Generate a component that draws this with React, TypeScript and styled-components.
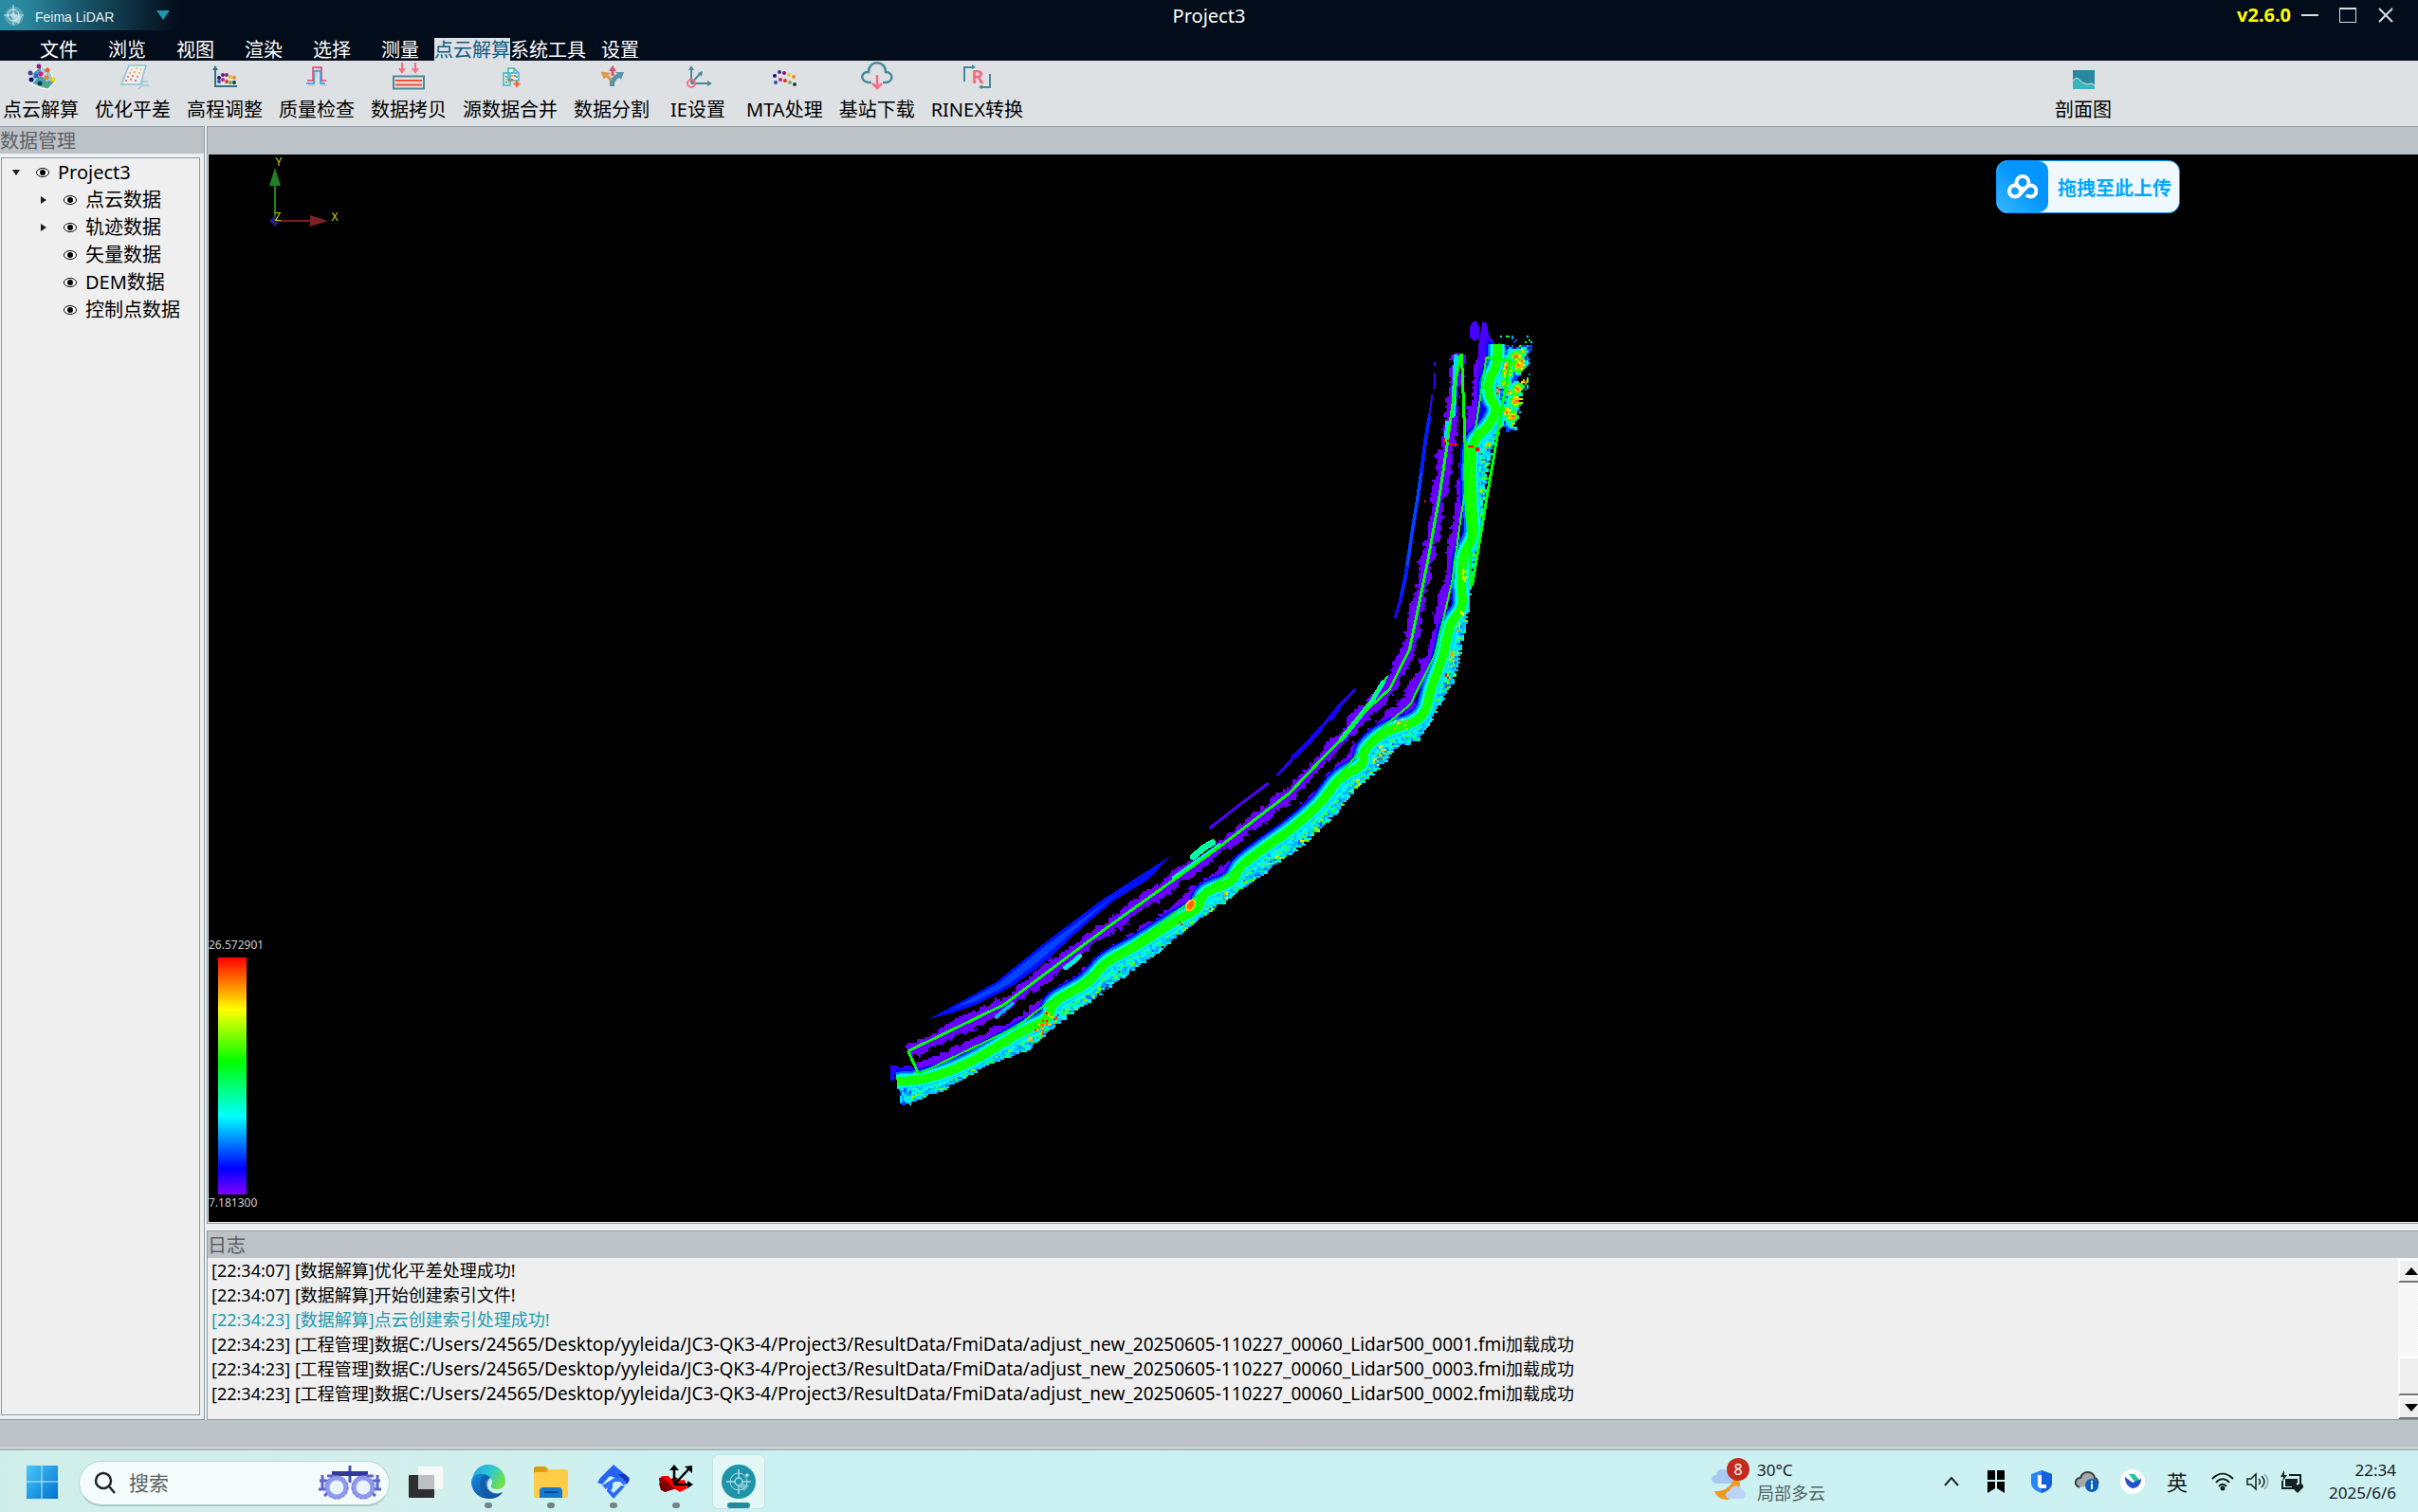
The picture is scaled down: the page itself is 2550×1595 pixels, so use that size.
import React from 'react';
import styled, { createGlobalStyle } from 'styled-components';

const fontUi = '"Noto Sans", "Noto Sans CJK SC", sans-serif';
const color = {
  ink: '#030c1a',
  ribbon: '#dee1e3',
  header: '#bdc2c6',
  face: '#efefef',
  edge: '#889dab',
  accent: '#2196aa',
};

const GlobalStyle = createGlobalStyle`
  * { box-sizing: border-box; }
  body { margin: 0; background: ${color.face}; font-family: ${fontUi}; font-size: 20px; color: #000; overflow: hidden; }
  button, input { font: inherit; color: inherit; border: 0; padding: 0; margin: 0; background: none; }
  ul { list-style: none; margin: 0; padding: 0; }
  svg { display: block; flex: none; }
`;

/* ---------- shell ---------- */

const Shell = styled.div`
  display: flex;
  flex-direction: column;
  height: 100vh;
`;

const TitleBar = styled.header`
  background: ${color.ink};
  color: #fff;
  height: 64px;
  flex: none;
`;

const TitleRow = styled.div`
  display: grid;
  grid-template-columns: 1fr auto 1fr;
  height: 40px;
`;

const Brand = styled.button`
  display: flex;
  align-items: center;
  width: 188px;
  height: 32px;
  padding-left: 4px;
  background: linear-gradient(90deg, #2a8ca3 0, #2a869d 28px, #1a5a70 80px, ${color.ink} 188px);
  font: 14px/32px "Liberation Sans", Arial, sans-serif;
  color: #e8f0f4;
`;

const BrandName = styled.span`
  margin: 4px 0 0 11px;
  width: 128px;
  text-align: left;
`;

const ProjectTitle = styled.h1`
  margin: 0;
  font-size: 20px;
  font-weight: 400;
  line-height: 34px;
`;

const WindowControls = styled.div`
  display: flex;
  justify-content: flex-end;
  align-items: center;
  height: 32px;
  padding-right: 14px;
`;

const Version = styled.span`
  color: #ff0;
  font-weight: 700;
  line-height: 34px;
`;

const WindowButton = styled.button`
  width: 40px;
  height: 32px;
  display: grid;
  place-items: center;
`;

const MenuBar = styled.nav`
  display: flex;
  height: 24px;
  padding-left: 26px;
`;

const MenuItem = styled.button<{ $active?: boolean }>`
  min-width: 72px;
  height: 24px;
  line-height: 26px;
  text-align: center;
  color: ${p => (p.$active ? '#0d5c82' : '#fff')};
  background: ${p => (p.$active ? color.ribbon : 'transparent')};
`;

const Ribbon = styled.div`
  display: flex;
  gap: 17px;
  flex: none;
  height: 69px;
  padding: 0 323px 0 3px;
  background: ${color.ribbon};
`;

const Tool = styled.button<{ $end?: boolean }>`
  display: flex;
  flex-direction: column;
  align-items: center;
  min-width: ${p => (p.$end ? 60 : 68)}px;
  margin-left: ${p => (p.$end ? 'auto' : 0)};
  line-height: 32px;
  white-space: nowrap;
`;

const Workspace = styled.main`
  display: grid;
  grid-template-columns: 216px minmax(0, 1fr);
  column-gap: 2px;
  flex: 1;
  min-height: 0;
  background: ${color.face};
`;

const Dock = styled.section<{ $grow?: boolean; $height?: number }>`
  display: flex;
  flex-direction: column;
  min-height: 0;
  flex: ${p => (p.$height ? `0 0 ${p.$height}px` : 1)};
  border: 1px solid ${color.edge};
  border-left-width: ${p => (p.$grow ? 1 : 0)}px;
  border-right-width: ${p => (p.$grow ? 0 : 1)}px;
`;

const DockColumn = styled.div`
  display: flex;
  flex-direction: column;
  gap: 7px;
  min-height: 0;
`;

const DockHeader = styled.h2`
  margin: 0;
  flex: none;
  height: 28px;
  background: ${color.header};
  color: #5d6166;
  font-size: 20px;
  font-weight: 400;
  line-height: 30px;
`;

const TreeBox = styled.div`
  flex: 1;
  margin: 4px 4px 4px 1px;
  border: 1px solid ${color.edge};
`;

const TreeRow = styled.li<{ $level: number }>`
  display: flex;
  align-items: center;
  height: 29px;
  padding-left: ${p => 8 + p.$level * 29}px;
  line-height: 28px;
  white-space: nowrap;
`;

const Twisty = styled.span`
  display: grid;
  place-items: center;
  width: 14px;
  margin-right: 13px;
`;

const TreeLabel = styled.span`
  margin-left: 8px;
`;

/* ---------- viewport ---------- */

const Viewport = styled.div`
  position: relative;
  flex: 1;
  min-height: 0;
  margin: 0 0 1px 1px;
  border-top: 1px solid ${color.header};
  background: #000;
  overflow: hidden;
`;

const CloudCanvas = styled.svg`
  width: 100%;
  height: 100%;
`;

const AxisOverlay = styled.svg`
  position: absolute;
  left: 55px;
  top: 0;
`;

const Legend = styled.div`
  position: absolute;
  left: 0;
  bottom: 11px;
  color: #ccc;
  font-size: 12px;
  line-height: 18px;
`;

const LegendBar = styled.div`
  width: 30px;
  height: 250px;
  margin: 4px 0 0 10px;
  background: linear-gradient(#f00, #ff0 22%, #0f0 44%, #0ff 67%, #00f 89%, #8000ff);
`;

const UploadPill = styled.button`
  position: absolute;
  top: 6px;
  right: 251px;
  display: flex;
  align-items: center;
  width: 194px;
  height: 56px;
  overflow: hidden;
  border: 1px solid #0a94ff;
  border-radius: 12px;
  background: #f0f8ff;
  color: #06a7ff;
  font-weight: 700;
  white-space: nowrap;
`;

const UploadMark = styled.span`
  display: grid;
  place-items: center;
  width: 54px;
  height: 54px;
  margin-right: 10px;
  border-radius: 10px;
  background: linear-gradient(45deg, #38b8ff, #0295ff 55%);
`;

/* ---------- log ---------- */

const LogBody = styled.div`
  display: flex;
  flex: 1;
  min-height: 0;
`;

const LogList = styled.ul`
  flex: 1;
  padding-left: 4px;
  font-size: 18px;
  line-height: 26px;
  white-space: nowrap;
  overflow: hidden;
`;

const LogLine = styled.li<{ $highlight?: boolean }>`
  height: 26px;
  color: ${p => (p.$highlight ? '#2499ad' : '#000')};
`;

const LogPath = styled.span`
  font-size: 19px;
`;

const ScrollBar = styled.div`
  display: flex;
  flex-direction: column;
  width: 21px;
  padding-top: 1px;
  background: repeating-conic-gradient(#fff 0 25%, ${color.face} 0 50%) 0 0 / 2px 2px;
`;

const ScrollButton = styled.button`
  display: grid;
  place-items: center;
  flex: none;
  height: 25px;
  padding-left: 4px;
  background: ${color.face};
  border-left: 2px solid #fff;
  border-top: 2px solid #fff;
  border-bottom: 2px solid #777;
`;

const ScrollThumb = styled.div`
  height: 41px;
  margin-top: auto;
  background: ${color.face};
  border-left: 2px solid #fff;
  border-top: 2px solid #fff;
  border-bottom: 2px solid #777;
`;

const StatusBar = styled.footer`
  flex: none;
  height: 32px;
  background: ${color.header};
  border-bottom: 2px solid #a5b7b7;
  box-shadow: inset 0 -1px #dfe4e4;
`;

/* ---------- taskbar ---------- */

const TaskBar = styled.footer`
  display: flex;
  align-items: center;
  flex: none;
  height: 65px;
  padding: 0 23px 0 27px;
  background: linear-gradient(90deg, #cfeeea, #d3efeb 14%, #caf1f2 30%, #cdf1f2);
  color: #14201f;
`;

const PlainButton = styled.button`
  display: grid;
  place-items: center;
`;

const SearchPill = styled.label`
  display: flex;
  align-items: center;
  width: 328px;
  height: 48px;
  margin: 4px 10px 0 22px;
  padding: 0 8px 0 15px;
  border: 1px solid #b9d9d8;
  border-bottom: 2px solid #a9c9c8;
  border-radius: 24px;
  background: #f3fbfb;
`;

const SearchInput = styled.input`
  flex: 1;
  min-width: 0;
  height: 32px;
  margin-left: 13px;
  font-size: 21px;
  outline: 0;
  &::placeholder { color: #586060; opacity: 1; }
`;

const Apps = styled.div`
  display: flex;
  gap: 10px;
`;

const AppButton = styled.button<{ $active?: boolean }>`
  display: flex;
  flex-direction: column;
  align-items: center;
  justify-content: space-between;
  width: 56px;
  height: 58px;
  padding-top: 10px;
  border-radius: 6px;
  border: 1px solid ${p => (p.$active ? '#c5e3e4' : 'transparent')};
  background: ${p => (p.$active ? '#e3f7f7' : 'transparent')};
`;

const RunMark = styled.span<{ $state: 'none' | 'open' | 'active' }>`
  width: ${p => (p.$state === 'active' ? 24 : 8)}px;
  height: 6px;
  border-radius: 3px;
  background: ${p => (p.$state === 'active' ? '#23899b' : p.$state === 'open' ? '#708685' : 'transparent')};
`;

const Weather = styled.button`
  display: flex;
  align-items: center;
  gap: 8px;
  margin-left: auto;
  margin-right: 110px;
  text-align: left;
  font-size: 17px;
  line-height: 24px;
`;

const Muted = styled.span`
  display: block;
  color: #536665;
  font-size: 18px;
`;

const Tray = styled.div`
  display: flex;
  align-items: center;
`;

const TrayButton = styled.button<{ $width: number }>`
  display: grid;
  place-items: center;
  width: ${p => p.$width}px;
  height: 40px;
  font-size: 22px;
  line-height: 40px;
`;

const Clock = styled.time`
  display: block;
  width: 86px;
  padding-top: 1px;
  text-align: right;
  font-size: 17px;
  line-height: 24px;
`;

/* ---------- point cloud ---------- */

type Pt = [number, number];

const band: Pt[] = [[1579,363],[1578,383],[1570,403],[1571,418],[1577,432],[1569,449],[1554,467],[1551,493],[1552,530],[1553,563],[1543,587],[1541,615],[1541,640],[1529,660],[1521,693],[1510,723],[1502,750],[1489,762],[1466,770],[1451,779],[1439,792],[1435,807],[1412,822],[1391,848],[1363,873],[1335,893],[1309,913],[1297,930],[1271,942],[1261,959],[1240,971],[1197,998],[1167,1015],[1145,1037],[1112,1057],[1103,1075],[1074,1090],[1023,1120],[979,1137],[945,1141]];
const outer: Pt[] = [[1588,367],[1588,395],[1583,420],[1585,440],[1578,456],[1572,470],[1567,490],[1564,520],[1560,548],[1554,580],[1550,610],[1548,630],[1540,677],[1531,717],[1512,750],[1494,780],[1473,787],[1451,811],[1430,828],[1400,864],[1371,890],[1315,931],[1260,970],[1213,1007],[1157,1048],[1114,1077],[1085,1104],[1070,1111],[1039,1122],[991,1149],[953,1163],[945,1143]];
const leftTrack: Pt[] = [[1540,373],[1535,400],[1526,467],[1517,527],[1505,593],[1494,647],[1486,685],[1465,727],[1434,755],[1414,780],[1396,798],[1359,837],[1286,893],[1256,915],[1232,932],[1165,980],[1118,1015],[1058,1060],[957,1109]];
const rightTrack: Pt[] = [[1567,377],[1554,463],[1546,510],[1540,547],[1531,613],[1513,690],[1487,743],[1457,768],[1434,793],[1414,815],[1383,853],[1363,872],[1308,913],[1264,944],[1213,982],[1167,1013],[1134,1040],[1106,1057],[1070,1084],[968,1133]];
const closingTracks: Pt[][] = [
  [[1541,373],[1545,477],[1545,520],[1549,567],[1551,618]],
  [[1552,618],[1592,380],[1567,377]],
  [[957,1109],[968,1133]],
];

const line = (pts: Pt[]) => 'M' + pts.map(p => p.join(' ')).join('L');

// Catmull-Rom subdivision, so the river channel bends softly.
function smooth(pts: Pt[]): Pt[] {
  const out: Pt[] = [];
  for (let i = 0; i < pts.length - 1; i++) {
    const p0 = pts[Math.max(0, i - 1)];
    const p1 = pts[i];
    const p2 = pts[i + 1];
    const p3 = pts[Math.min(pts.length - 1, i + 2)];
    for (let k = 0; k < 6; k++) {
      const t = k / 6;
      const f = (a: number, b: number, c: number, d: number) =>
        Math.round(5 * (2 * b + (c - a) * t + (2 * a - 5 * b + 4 * c - d) * t * t + (3 * b - a - 3 * c + d) * t * t * t)) / 10;
      out.push([f(p0[0], p1[0], p2[0], p3[0]), f(p0[1], p1[1], p2[1], p3[1])]);
    }
  }
  out.push(pts[pts.length - 1]);
  return out;
}

const channel = smooth(band);

function shift(pts: Pt[], amount: number): Pt[] {
  return pts.map((p, i) => {
    const a = pts[Math.max(0, i - 1)];
    const b = pts[Math.min(pts.length - 1, i + 1)];
    const len = Math.hypot(b[0] - a[0], b[1] - a[1]) || 1;
    return [p[0] + ((b[1] - a[1]) / len) * amount, p[1] - ((b[0] - a[0]) / len) * amount];
  });
}

function makeRandom(seed: number) {
  let s = seed;
  return () => {
    s = (s * 1664525 + 1013904223) >>> 0;
    return s / 4294967296;
  };
}

function resample(pts: Pt[], count: number): Pt[] {
  const dist = [0];
  for (let i = 1; i < pts.length; i++) {
    dist.push(dist[i - 1] + Math.hypot(pts[i][0] - pts[i - 1][0], pts[i][1] - pts[i - 1][1]));
  }
  const total = dist[dist.length - 1];
  const out: Pt[] = [];
  let k = 1;
  for (let i = 0; i < count; i++) {
    const d = (total * i) / (count - 1);
    while (k < pts.length - 1 && dist[k] < d) k++;
    const t = (d - dist[k - 1]) / (dist[k] - dist[k - 1]);
    out.push([
      pts[k - 1][0] + (pts[k][0] - pts[k - 1][0]) * t,
      pts[k - 1][1] + (pts[k][1] - pts[k - 1][1]) * t,
    ]);
  }
  return out;
}

class Speckles {
  paths: Record<string, string> = {};
  add(fill: string, x: number, y: number, w = 2, h = 2) {
    this.paths[fill] = (this.paths[fill] ?? '') + `M${Math.round(x / 2) * 2} ${Math.round(y / 2) * 2}h${w}v${h}h-${w}z`;
  }
  render() {
    return Object.entries(this.paths).map(([fill, d]) => <path key={fill} fill={fill} d={d} />);
  }
}

// Ragged returns on both sides of a flight line; the width wanders along the line.
function fringe(target: Speckles, pts: Pt[], inner: number, outside: number, seed: number, fill: string) {
  const rnd = makeRandom(seed);
  const s = resample(pts, 1300);
  let a = inner;
  let b = outside;
  for (let i = 1; i < s.length; i++) {
    const dx = s[i][0] - s[i - 1][0];
    const dy = s[i][1] - s[i - 1][1];
    const len = Math.hypot(dx, dy) || 1;
    const nx = dy / len;
    const ny = -dx / len;
    a = Math.min(inner + 2, Math.max(inner - 3, a + (rnd() - 0.5) * 3));
    b = Math.max(outside - 2, Math.min(outside + 3, b + (rnd() - 0.5) * 3));
    for (let o = a; o <= b; o += 1) target.add(fill, s[i][0] + nx * o, s[i][1] + ny * o);
    if (rnd() < 0.1) {
      const o = rnd() < 0.5 ? a - 2 : b + 2;
      target.add(fill, s[i][0] + nx * o, s[i][1] + ny * o);
    }
  }
}

const violet = new Speckles();
fringe(violet, leftTrack, -6, 4, 11, '#6900ff');
fringe(violet, rightTrack, -8, 0, 23, '#6900ff');

const bank = new Speckles();
(() => {
  const rnd = makeRandom(7);
  const c = resample(channel, 1100);
  const o = resample(outer, 1100);
  for (let i = 0; i < c.length; i++) {
    for (let k = 0; k < 7; k++) {
      const u = 0.3 + rnd() * 0.72;
      const r = rnd();
      const near = u < 0.65;
      const fill = near
        ? r < 0.05 ? '#28ff5a' : r < 0.5 ? '#00ffd5' : r < 0.85 ? '#00f0ff' : '#00c3ff'
        : r < 0.02 ? '#6dff00' : r < 0.06 ? '#00ff73' : r < 0.25 ? '#00f0ff' : r < 0.5 ? '#00beff' : r < 0.8 ? '#0087ff' : '#0050ff';
      bank.add(fill, c[i][0] + (o[i][0] - c[i][0]) * u, c[i][1] + (o[i][1] - c[i][1]) * u, r < 0.3 ? 4 : 2, 2);
    }
  }
})();

// Tree canopy east of the channel head: heights fall off around each crown.
const crowns: [number, number, number][] = [
  [1597,375,7],[1600,385,8],[1587,386,9],[1606,401,6],[1599,409,7],[1597,422,8],[1603,380,4],[1587,393,6],
  [1590,413,4],[1588,433,6],[1594,438,7],[1603,422,5],[1604,370,4],[1586,403,5],[1596,447,4],
];
const canopy = new Speckles();
(() => {
  const rnd = makeRandom(91);
  for (let y = 364; y < 456; y += 2) {
    const right = y < 374 ? 1614 : y < 396 ? 1613 : y < 412 ? 1610 : y < 426 ? 1605 : y < 444 ? 1603 : 1600;
    const left = y < 430 ? 1581 : 1581 + (y - 430) * 0.3;
    for (let x = left; x < right; x += 2) {
      const edge = Math.min(right - x, y - 362, (457 - y) * 0.7);
      if (rnd() > 0.25 + edge * 0.12) continue;
      const gx = x - 1605;
      const gy = y - 394;
      if (Math.abs(gx + gy * 0.8) < 4 && Math.abs(gx - gy) < 14) continue;
      let best = 2;
      crowns.forEach(([cx, cy, r]) => { best = Math.min(best, Math.hypot(x - cx, y - cy) / r); });
      const v = best + (rnd() - 0.5) * 0.35;
      const west = x < 1593 ? 0.25 : 0;
      let fill = '#0041ff';
      if (v < 0.2) fill = '#ff5a00';
      else if (v < 0.38) fill = '#ffb400';
      else if (v < 0.55) fill = '#d2ff00';
      else if (v < 0.78) fill = '#37ff00';
      else if (v < 0.95 + west) fill = '#00ff96';
      else if (v < 1.2 + west) fill = '#00e1ff';
      else if (rnd() < 0.3) fill = '#0087ff';
      canopy.add(fill, x, y);
    }
  }
  const stray = ['#0046ff', '#00a0ff', '#00e6ff', '#00ff5a', '#0064ff', '#28ff00'];
  for (let i = 0; i < 18; i++) canopy.add(stray[i % 6], 1580 + rnd() * 34, 353 + rnd() * 12);
  for (let i = 0; i < 80; i++) {
    violet.add(rnd() < 0.5 ? '#3200ff' : '#0014ff', 936 + rnd() * 24, 1124 + rnd() * 14, 4, 2);
    canopy.add(stray[i % 3], 947 + rnd() * 12, 1144 + rnd() * 18, 2, 4);
  }
})();

const hot = new Speckles();
(() => {
  const rnd = makeRandom(5);
  const clusters: [number, number, number, number, number, string[]][] = [
    [1580, 411, 2, 3, 10, ['#ff9b00', '#ff1400', '#ff1400']],
    [1568, 469, 3, 4, 9, ['#ffc800', '#64ff00', '#ff9b00']],
    [1544, 607, 3, 10, 14, ['#96ff00', '#d2ff00']],
    [1541, 645, 2, 3, 5, ['#ffe600']],
    [1537, 660, 2, 5, 7, ['#ff9b00', '#96ff00']],
    [1531, 694, 3, 9, 16, ['#ff9b00', '#ffc800', '#64ff00']],
    [1526, 717, 3, 8, 8, ['#ff1400', '#64ff00']],
    [1476, 764, 6, 8, 10, ['#ff9b00', '#d2ff00']],
    [1457, 789, 4, 3, 9, ['#ffe600', '#ffc800']],
    [1454, 797, 3, 4, 7, ['#ff3200', '#96ff00']],
    [1450, 803, 3, 3, 6, ['#96ff00', '#ffe600']],
    [1432, 824, 3, 3, 6, ['#96ff00', '#ffe600']],
    [1388, 874, 3, 3, 6, ['#96ff00', '#64ff00']],
    [1372, 886, 3, 3, 6, ['#64ff00', '#ffe600']],
    [1345, 903, 3, 2, 4, ['#d2ff00']],
    [1292, 943, 3, 4, 9, ['#ffe600', '#ff9b00', '#64ff00']],
    [1243, 973, 1, 1, 2, ['#ff3200']],
    [1105, 1074, 8, 8, 22, ['#ff1400', '#ff6400', '#ffc800', '#ff9b00']],
    [1094, 1085, 5, 5, 12, ['#ffc800', '#ff6400', '#ff1400']],
    [1084, 1094, 3, 3, 8, ['#ffc800', '#ff9b00']],
    [1524, 463, 3, 3, 5, ['#f00']],
    [1532, 467, 6, 2, 6, ['#f00']],
    [1550, 470, 4, 1, 4, ['#f00']],
    [1558, 473, 3, 2, 8, ['#f00']],
    [1502, 528, 1, 1, 1, ['#f00']],
  ];
  clusters.forEach(([x, y, rx, ry, n, fills]) => {
    for (let i = 0; i < n; i++) hot.add(fills[i % fills.length], x + (rnd() * 2 - 1) * rx, y + (rnd() * 2 - 1) * ry);
  });
})();

const PointCloud = () => (
  <CloudCanvas viewBox="219 163 2331 1126" preserveAspectRatio="xMidYMid meet" shapeRendering="crispEdges" role="img" aria-label="点云">
    <g fill="none" strokeLinecap="round" strokeLinejoin="round">
      <path stroke="#3c00ff" strokeWidth="2" d="M1513 382v4M1513 394l-1 16M1510 417L1503 463" />
      <path stroke="#001eff" strokeWidth="4" d="M1507 440L1503 463L1496 517L1489 560L1482 607L1476 635" />
      <path stroke="#0046ff" strokeWidth="3" d="M1498 500L1489 560L1484 595" />
      <path stroke="#2800ff" strokeWidth="3" d="M1477 630L1471 651" />
      <path stroke="#2800ff" strokeWidth="3" d="M1428 728L1407 750L1384 779L1371 792L1347 817" />
      <path stroke="#1400ff" strokeWidth="5" d="M1412 745L1403 758M1392 769L1375 788L1364 798" />
      <path stroke="#5000ff" strokeWidth="3" d="M1336 827L1308 848L1276 873" />
    </g>
    <path fill="#000fff" d="M1234 903L1193 929L1159 951L1102 994L1050 1036L1003 1062L979 1075L1003 1069L1031 1059L1066 1041L1098 1018L1141 978L1173 951L1210 928Z" />
    <path fill="#0046ff" d="M1193 932L1159 956L1102 998L1052 1038L1005 1064L1031 1055L1062 1039L1095 1014L1138 976L1165 953Z" />
    {violet.render()}
    <path fill="#4600ff" d="M1552 340l4-2l4 8v10l-5 4l-5-4v-12zM1563 340h4l3 14l8 10l-2 26l-14 60l-8 22l3-60l2-50z" />
    <path fill="#0000ff" d="M1568 358l10 6l-2 26l-12 20l2 26l-10 26l8-70z" />
    <g fill="none" strokeLinejoin="round">
      <path stroke="#0000ff" strokeWidth="16" d={line(shift(channel, -4))} />
      <path stroke="#006eff" strokeWidth="14" d={line(shift(channel, -3))} />
    </g>
    <path fill="#00a5ff" d={line([...channel, ...[...outer].reverse()]) + 'Z'} />
    {bank.render()}
    {canopy.render()}
    <g fill="none" strokeLinejoin="round">
      <path stroke="#00beff" strokeWidth="16" d={line(channel)} />
      <path stroke="#00f5ff" strokeWidth="14" d={line(channel)} />
      <path stroke="#00ffb4" strokeWidth="12" d={line(channel)} />
      <path stroke="#14ff00" strokeWidth="9" d={line(channel)} />
      <g strokeLinecap="round">
        <path stroke="#00dcff" strokeWidth="5" d="M1535 376L1533 420L1532 438M1526 446L1525 464" />
        <path stroke="#00f5d2" strokeWidth="5" d="M1458 720L1446 740L1431 759L1414 780M1286 892L1262 909L1238 926" />
        <path stroke="#00ffa0" strokeWidth="7" d="M1278 889L1268 895L1258 904" />
        <path stroke="#00f0dc" strokeWidth="5" d="M1138 1009L1131 1015L1123 1021" />
        <path stroke="#00b4ff" strokeWidth="4" d="M1067 1059L1058 1066L1050 1073" />
      </g>
      <path stroke="#00ff00" strokeWidth="3" d={line(leftTrack)} />
      <path stroke="#00ff00" strokeWidth="2" d={line(rightTrack)} />
      {closingTracks.map((t, i) => <path key={i} stroke="#00ff00" strokeWidth="3" d={line(t)} />)}
      <path stroke="#00ff3c" strokeWidth="2" d="M1463 713L1432 757" />
    </g>
    <ellipse cx="1255" cy="955" rx="5" ry="7" fill="#ffc800" transform="rotate(35 1255 955)" />
    <ellipse cx="1255" cy="955" rx="3" ry="5" fill="#ff6400" transform="rotate(35 1255 955)" />
    {hot.render()}
  </CloudCanvas>
);

const Axis = () => (
  <AxisOverlay width="90" height="84" viewBox="0 0 90 84" aria-hidden="true">
    <path d="M15 70V30" stroke="#208020" strokeWidth="2" />
    <path d="M15 14l6 19H9z" fill="#208020" />
    <path d="M15 70h44" stroke="#802020" strokeWidth="2" />
    <path d="M71 70l-19-6v12z" fill="#802020" />
    <path d="M15 64l6 6-6 6-6-6z" fill="#1f1f80" />
    <g fill="#cccc00" fontFamily="Noto Sans, sans-serif" fontSize="12" textAnchor="middle">
      <text x="19" y="12">Y</text>
      <text x="18" y="70">Z</text>
      <text x="78" y="70">X</text>
    </g>
  </AxisOverlay>
);

/* ---------- icons ---------- */

const Dots = ({ list, r = 3 }: { list: [number, number, string][]; r?: number }) => (
  <>{list.map(([x, y, f], i) => <circle key={i} cx={x} cy={y} r={r} fill={f} />)}</>
);

const teal = '#468a9f';
const pink = '#f66d82';

const toolIcons: Record<string, React.ReactNode> = {
  solve: (
    <g transform="translate(1 0)">
      <path d="M17 6L7 15l1 9 9 4 7 2 8-8-6-12z" fill="#9cc9d4" />
      <path d="M17 6L7 15l6 3 6-2zM8 24l5-6 6-2 5 5 8 1-8 8-7-4z" fill="#4b9fb1" />
      <path d="M17 6L7 14v10l10 5 8 1 7-8-6-12-9-4 2 10 5 6M7 15l12 1 7-6M8 24l5-6" fill="none" stroke="#fff" strokeWidth="1" />
      <Dots list={[[15,6,'#8c1a86'],[6,13,'#4a3a9a'],[24,10,'#f0641e'],[12,16,'#3262b8'],[17,14,'#e0148c'],[7,20,'#14146e'],[23,18,'#e88420'],[30,20,'#f8d200'],[16,24,'#0e3c44'],[23,26,'#52b25c']]} r={2.5} />
    </g>
  ),
  adjust: (
    <>
      <path d="M14 5h18l-6 20H6z" fill="#eaf0f2" stroke="#8fc3cf" strokeWidth="1.500" />
      <Dots list={[[17,9,'#ffc040'],[22,8,'#ffb020'],[27,9,'#ffc040'],[15,13,'#ff9840'],[20,12,'#ff8a30'],[25,13,'#ff9840'],[13,17,'#f66a3c'],[18,16,'#f05030'],[23,17,'#f66a3c'],[11,21,'#e8484c'],[16,20,'#e04040'],[21,21,'#e8484c']]} r={1} />
      <path d="M28 19v7h7M28 26l-4 4M28 22h6" fill="none" stroke="#9cc8d2" strokeWidth="1.500" />
    </>
  ),
  height: (
    <>
      <path d="M8 8v19h23" fill="none" stroke="#35708a" strokeWidth="2" />
      <path d="M8 5l3 5H5z" fill="#35708a" />
      <Dots list={[[12,18,'#1c1464'],[16,15,'#4a2a86'],[20,15,'#8c1a7e'],[24,17,'#f0b428'],[28,18,'#ea8a20'],[12,22,'#2c50b4'],[16,20,'#c81e78'],[20,22,'#d8381e'],[24,23,'#6cb23c'],[28,23,'#2a3a3a']]} r={2} />
    </>
  ),
  quality: (
    <>
      <path d="M9 26h6l3-17h5v17h6" fill="none" stroke="#c2ccd2" strokeWidth="2" />
      <path d="M8 21h6V7h9v14h5" fill="none" stroke="#e8405a" strokeWidth="1.500" />
      <path d="M7 24h8V11h7v13h5" fill="none" stroke="#2f9be8" strokeWidth="1.500" />
    </>
  ),
  copy: (
    <>
      <path d="M11 2v9m-3-3l3 4 3-4M25 2v9m-3-3l3 4 3-4" fill="none" stroke={pink} strokeWidth="2" />
      <path d="M2 16.500h32v13H2z" fill="#e8e0dc" stroke={teal} strokeWidth="2" />
      <path d="M4 21h28M4 25.500h28" stroke="#f05038" strokeWidth="2" />
    </>
  ),
  merge: (
    <>
      <path d="M16 8h6l5 5v8H16zM11 13h7v13h-7z" fill="#e2f1f2" stroke="#45b2c0" strokeWidth="1.500" />
      <path d="M22 8v5h5" fill="none" stroke="#45b2c0" strokeWidth="1.500" />
      <g fill="#45b2c0"><path d="M13 16h2v2h-2zM13 22h2v2h-2zM19 12h2v2h-2zM24 16h2v2h-2z" /></g>
      <g fill="#e8b020"><path d="M13 19h2v2h-2zM16 22h2v2h-2zM19 15h2v2h-2z" /></g>
      <g fill="#e0604a"><path d="M22 15h2v2h-2zM19 19h2v2h-2zM16 19h2v2h-2z" /></g>
      <path d="M25 21v7M21.500 24.500h7" stroke="#ff5a1e" strokeWidth="2" />
    </>
  ),
  split: (
    <>
      <path d="M16 26c1-5-1-7-4-9l-2 2-3-7 9 1-2 2c4 3 5 6 5 11z" fill="#e29a48" stroke="#c88232" strokeWidth=".5" />
      <path d="M16 27c0-7 3-11 8-13l-2-2 9 0-3 8-2-2c-4 2-5 5-5 9z" fill="#5794aa" />
      <path d="M19 5l4 6h-2.500v5h-3v-5H15z" fill="#d8546c" />
    </>
  ),
  ie: (
    <>
      <path d="M11 24V9M11 24h18M11 24L20 14" fill="none" stroke={teal} strokeWidth="2" />
      <path d="M11 5l3 5H8zM33 24l-5-3v6zM23 11l-1 6-4-4z" fill={teal} />
      <circle cx="11" cy="24" r="4" fill="none" stroke={pink} strokeWidth="2" />
    </>
  ),
  mta: <Dots list={[[8,16,'#14106e'],[13,12,'#3c3296'],[18,13,'#82147e'],[23,15,'#f0c828'],[28,17,'#ea8a20'],[9,23,'#2c50b4'],[14,20,'#c81e78'],[19,21,'#d8381e'],[24,23,'#82b450'],[29,25,'#1e3c3c']]} r={2} />,
  download: (
    <>
      <path d="M12 23H9C-1 22 1 11 9 12c0-13 18-13 18 0 8 0 9 10 0 11h-3" fill="none" stroke={teal} strokeWidth="2.500" />
      <path d="M18 15v14m-5-5l5 5 5-5" fill="none" stroke={pink} strokeWidth="2.500" />
    </>
  ),
  rinex: (
    <>
      <path d="M5 22V7h8M24 28h8V14" fill="none" stroke={teal} strokeWidth="2" />
      <path d="M13 4l4 3-4 2zM24 25l-4 3 4 2z" fill={teal} />
      <text x="19" y="24" fill={pink} fontFamily="Noto Sans, sans-serif" fontWeight="700" fontSize="20" textAnchor="middle">R</text>
    </>
  ),
  profile: (
    <>
      <path d="M7 10h23v20H7z" fill="#2a87a0" />
      <path d="M7 21l4-3 3 2 3 3 5 2 5-1 3 2v4H7z" fill="#3bb4c1" />
      <path d="M7 21l4-3 3 2 3 3 5 2 5-1 3 2" fill="none" stroke="#d9ecc9" />
    </>
  ),
};

const tools: [string, string][] = [
  ['solve', '点云解算'], ['adjust', '优化平差'], ['height', '高程调整'], ['quality', '质量检查'],
  ['copy', '数据拷贝'], ['merge', '源数据合并'], ['split', '数据分割'], ['ie', 'IE设置'],
  ['mta', 'MTA处理'], ['download', '基站下载'], ['rinex', 'RINEX转换'],
];

const ToolIcon = ({ name }: { name: string }) => (
  <svg width="36" height="36" viewBox="0 0 36 36" aria-hidden="true">{toolIcons[name]}</svg>
);

const Eye = () => (
  <svg width="16" height="12" viewBox="0 0 16 12" aria-hidden="true">
    <ellipse cx="8" cy="6" rx="6.500" ry="4.500" fill="#fff" stroke="#000" />
    <circle cx="8" cy="6" r="3" />
  </svg>
);

const Arrow = ({ open }: { open: boolean }) => (
  <svg width="10" height="10" viewBox="0 0 10 10" aria-hidden="true">
    <path d={open ? 'M1 2h8L5 8z' : 'M2 1l6 4-6 4z'} fill="#1c1c1c" />
  </svg>
);

const BrandMark = () => (
  <svg width="22" height="26" viewBox="0 0 22 26" fill="none" aria-hidden="true">
    <circle cx="11" cy="14" r="10" fill="#8fc4d0" opacity=".45" />
    <circle cx="10" cy="13" r="6" stroke="#d5ebf0" />
    <circle cx="10" cy="13" r="2" stroke="#d5ebf0" />
    <path d="M10 2v22M0 13h21" stroke="#d5ebf0" />
    <path d="M11 13l8 1-3 8-5-2z" fill="#d5ebf0" opacity=".7" />
  </svg>
);

const appIcons: Record<string, React.ReactNode> = {
  tasks: (
    <>
      <path d="M0 12q0-1 1-1h26v23q0 1-1 1H1q-1 0-1-1z" fill="#2d2f30" />
      <path d="M10 2h24q2 0 2 2v20q0 2-2 2H10z" fill="#f7f9f9" />
      <path d="M10 11h17v15H10z" fill="#bcc0c1" />
    </>
  ),
  edge: (
    <>
      <defs>
        <linearGradient id="edgeTop" x1="0" x2="1" y2=".5"><stop stopColor="#1b9fe8" /><stop offset=".55" stopColor="#30c8d0" /><stop offset="1" stopColor="#6fe04a" /></linearGradient>
        <linearGradient id="edgeLow" x1="0" y1="0" x2="1" y2="1"><stop stopColor="#168ce0" /><stop offset="1" stopColor="#0c3f86" /></linearGradient>
      </defs>
      <path d="M1 15C3 5 10 0 18 0c10 0 18 8 18 17 0 7-5 9-9 9-5 0-7-2-6-4 3-5-1-10-7-10-7 0-11 3-13 3z" fill="url(#edgeTop)" />
      <path d="M0 18c1-6 6-9 12-8 4 0 7 2 8 4-6 1-7 12 2 16 4 2 8 1 11-1-3 5-9 7-15 7C8 36 0 28 0 18z" fill="url(#edgeLow)" />
      <path d="M12 12c-6 6-2 20 8 24 6 0 10-3 13-7-12 5-21-6-13-15-2-2-5-3-8-2z" fill="#125aa8" opacity=".7" />
    </>
  ),
  folder: (
    <>
      <path d="M0 4q0-2 2-2h10l4 4v8H0z" fill="#dc9c10" />
      <path d="M0 9q0-1 1-1h11l4-3h18q2 0 2 2v26q0 2-2 2H2q-2 0-2-2z" fill="#ffcc48" />
      <path d="M6 35v-7q0-4 4-4h16q4 0 4 4v7z" fill="#1478d0" />
      <path d="M11 29h14" stroke="#0a4a90" strokeWidth="2" />
    </>
  ),
  feima: (
    <>
      <path d="M18 0L4 14l-3 5 5 2 8-9 6 2 8 3 4 1 3-4-4-3z" fill="#2463f6" />
      <path d="M23 10h7l5 6-3 5-4-6z" fill="#1436b4" />
      <path d="M6 22l4 4 9-8h6l4 4 3-3-5-5h-8z" fill="#2f70fa" />
      <path d="M12 24l5-5v6l-2 2 3 3 8-8 4 1-12 13-7-8z" fill="#2a68f8" />
    </>
  ),
  axes: (
    <>
      <path d="M0 14l8-2 3 4 6-3 10 6-3 8-8-1-10 3-5-6z" fill="#8c0000" />
      <path d="M2 12h8l5 6 12-2 3 9-8 4-6-4z" fill="#f00" />
      <path d="M0 20l9-2 4 6-6 5-5-2z" fill="#7a0000" />
      <path d="M16 22V4M16 21h17M17 20L32 4" stroke="#000" strokeWidth="2.500" />
      <path d="M16 0l5 6H11zM36 21l-6-4v8zM35 1v8l-8-7z" />
    </>
  ),
  lidar: (
    <>
      <circle cx="18" cy="18" r="18" fill="#1e94a8" />
      <circle cx="18" cy="18" r="9" fill="none" stroke="#a6dbe4" />
      <circle cx="18" cy="18" r="4" fill="none" stroke="#a6dbe4" strokeWidth="1.500" />
      <path d="M18 5v9M18 22v9M5 18h9M22 18h9" stroke="#a6dbe4" strokeWidth="1.500" />
      <path d="M20 19l9 3-5 6-5-4z" fill="#a6dbe4" opacity=".6" />
      <circle cx="27" cy="11" r="1.500" fill="#fff" />
    </>
  ),
};

const apps: [string, string, 'none' | 'open' | 'active'][] = [
  ['tasks', '任务视图', 'none'], ['edge', 'Edge', 'open'], ['folder', '文件资源管理器', 'open'],
  ['feima', 'Feima', 'open'], ['axes', 'Axes', 'open'], ['lidar', 'Feima LiDAR', 'active'],
];

const Glasses = () => (
  <svg width="66" height="36" viewBox="0 0 66 36" fill="none" aria-hidden="true">
    <path d="M33 0v18M14 9h38" stroke="#4652b8" strokeWidth="3" />
    <path d="M14 6h38v5H14z" fill="#34389a" />
    <path d="M4 10v14M62 10v14M1 16h8M57 16h8M0 25h7M59 25h7M9 11h8M50 11h8M6 32l5-4M60 32l-5-4" stroke="#5c66c8" strokeWidth="3" />
    <circle cx="19" cy="23" r="10" fill="#eaf4fd" stroke="#8e9af0" strokeWidth="5" />
    <circle cx="47" cy="23" r="10" fill="#eaf4fd" stroke="#8e9af0" strokeWidth="5" />
    <circle cx="19" cy="23" r="12" stroke="#5e6ad0" strokeDasharray="2 3" />
    <circle cx="47" cy="23" r="12" stroke="#5e6ad0" strokeDasharray="2 3" />
  </svg>
);

const trayIcons: { label: string; width: number; node: React.ReactNode }[] = [
  { label: '显示隐藏的图标', width: 46, node: <svg width="18" height="12" viewBox="0 0 18 12"><path d="M2 10l7-8 7 8" fill="none" stroke="#1c2828" strokeWidth="2" /></svg> },
  { label: '书签', width: 48, node: <svg width="18" height="24" viewBox="0 0 18 24"><path d="M0 0h8v10H0zM10 0h8v10h-8zM0 12h8v7l-8 5zM10 12h8v12l-8-5z" /></svg> },
  { label: '安全', width: 48, node: <svg width="22" height="24" viewBox="0 0 22 24"><path d="M11 0l11 4v9c0 6-5 9-11 11C5 22 0 19 0 13V4z" fill="#2a86f4" /><path d="M11 0l11 4v9c0 6-5 9-11 11z" fill="#1560dc" /><path d="M9 5v10q0 2 2 2h5" fill="none" stroke="#fff" strokeWidth="4" /></svg> },
  { label: '同步', width: 48, node: <svg width="26" height="24" viewBox="0 0 26 24"><path d="M5 18c-7-3-4-10 1-10 3-9 14-7 15 0 3 1 4 4 3 7" fill="#a3a8a8" stroke="#383e3e" strokeWidth="2" /><circle cx="18" cy="16" r="7" fill="#0a5fc0" /><path d="M18 14v6M18 11v2" stroke="#fff" strokeWidth="2" /></svg> },
  { label: '网盘', width: 48, node: <svg width="26" height="26" viewBox="0 0 26 26"><circle cx="13" cy="13" r="13" fill="#fff" /><path d="M9 5h6l5 6-4 3z" fill="#16c8a8" /><path d="M5 8l8 6 9-4c0 6-4 10-9 10-5-1-8-6-8-12z" fill="#2450c8" /></svg> },
];

/* ---------- data ---------- */

const menus = ['文件', '浏览', '视图', '渲染', '选择', '测量', '点云解算', '系统工具', '设置'];

const tree: { label: string; level: number; arrow?: 'open' | 'closed' }[] = [
  { label: 'Project3', level: 0, arrow: 'open' },
  { label: '点云数据', level: 1, arrow: 'closed' },
  { label: '轨迹数据', level: 1, arrow: 'closed' },
  { label: '矢量数据', level: 1 },
  { label: 'DEM数据', level: 1 },
  { label: '控制点数据', level: 1 },
];

const dataPath = 'C:/Users/24565/Desktop/yyleida/JC3-QK3-4/Project3/ResultData/FmiData/adjust_new_20250605-110227_00060_Lidar500_';
const logs: { text: string; path?: string; result?: string; highlight?: boolean }[] = [
  { text: '[22:34:07] [数据解算]优化平差处理成功!' },
  { text: '[22:34:07] [数据解算]开始创建索引文件!' },
  { text: '[22:34:23] [数据解算]点云创建索引处理成功!', highlight: true },
  { text: '[22:34:23] [工程管理]数据', path: `${dataPath}0001.fmi`, result: '加载成功' },
  { text: '[22:34:23] [工程管理]数据', path: `${dataPath}0003.fmi`, result: '加载成功' },
  { text: '[22:34:23] [工程管理]数据', path: `${dataPath}0002.fmi`, result: '加载成功' },
];

export default function App() {
  return (
    <Shell>
      <GlobalStyle />
      <TitleBar>
        <TitleRow>
          <Brand>
            <BrandMark />
            <BrandName>Feima LiDAR</BrandName>
            <svg width="14" height="10" viewBox="0 0 14 10" aria-hidden="true"><path d="M0 0h14L7 10z" fill={color.accent} /></svg>
          </Brand>
          <ProjectTitle>Project3</ProjectTitle>
          <WindowControls>
            <Version>v2.6.0</Version>
            <WindowButton aria-label="最小化"><svg width="18" height="18"><path d="M0 9h18" stroke="#d8dde2" strokeWidth="2" /></svg></WindowButton>
            <WindowButton aria-label="最大化"><svg width="18" height="18"><path d="M.5 2v14.500h17V2M0 2.500h18" fill="none" stroke="#d8dde2" /><path d="M0 1h18v2H0z" fill="#d8dde2" /></svg></WindowButton>
            <WindowButton aria-label="关闭"><svg width="18" height="18"><path d="M2 2l14 14M16 2L2 16" stroke="#d8dde2" strokeWidth="2" /></svg></WindowButton>
          </WindowControls>
        </TitleRow>
        <MenuBar>
          {menus.map(m => <MenuItem key={m} $active={m === '点云解算'}>{m}</MenuItem>)}
        </MenuBar>
      </TitleBar>

      <Ribbon>
        {tools.map(([icon, label]) => <Tool key={icon}><ToolIcon name={icon} />{label}</Tool>)}
        <Tool $end><ToolIcon name="profile" />剖面图</Tool>
      </Ribbon>

      <Workspace>
        <Dock>
          <DockHeader>数据管理</DockHeader>
          <TreeBox>
            <ul>
              {tree.map(n => (
                <TreeRow key={n.label} $level={n.level}>
                  <Twisty>{n.arrow && <Arrow open={n.arrow === 'open'} />}</Twisty>
                  <Eye />
                  <TreeLabel>{n.label}</TreeLabel>
                </TreeRow>
              ))}
            </ul>
          </TreeBox>
        </Dock>
        <DockColumn>
          <Dock $grow>
            <DockHeader />
            <Viewport>
              <PointCloud />
              <Axis />
              <UploadPill>
                <UploadMark>
                  <svg width="32" height="26" viewBox="0 0 32 26" fill="none" stroke="#fff" strokeWidth="4" aria-hidden="true">
                    <circle cx="16" cy="8.500" r="6.500" />
                    <circle cx="8" cy="17.500" r="6" />
                    <path d="M12 22L20 13.500a6 6 0 1 1 0 8" />
                  </svg>
                </UploadMark>
                拖拽至此上传
              </UploadPill>
              <Legend>
                26.572901
                <LegendBar />
                7.181300
              </Legend>
            </Viewport>
          </Dock>
          <Dock $grow $height={200}>
            <DockHeader>日志</DockHeader>
            <LogBody>
              <LogList>
                {logs.map((l, i) => (
                  <LogLine key={i} $highlight={l.highlight}>
                    {l.text}
                    {l.path && <LogPath>{l.path}</LogPath>}
                    {l.result}
                  </LogLine>
                ))}
              </LogList>
              <ScrollBar>
                <ScrollButton aria-label="向上滚动"><svg width="14" height="8"><path d="M7 0l7 8H0z" /></svg></ScrollButton>
                <ScrollThumb />
                <ScrollButton aria-label="向下滚动"><svg width="14" height="8"><path d="M0 0h14L7 8z" /></svg></ScrollButton>
              </ScrollBar>
            </LogBody>
          </Dock>
        </DockColumn>
      </Workspace>
      <StatusBar />

      <TaskBar>
        <PlainButton aria-label="开始">
          <svg width="34" height="36" viewBox="0 0 34 36">
            <defs><linearGradient id="win" x2="1" y2="1"><stop stopColor="#48c8fa" /><stop offset="1" stopColor="#0070d0" /></linearGradient></defs>
            <path d="M1 1h15.500v16.500H1zM17.500 1H34v16.500H17.500zM1 18.500h15.500V36H1zM17.500 18.500H34V36H17.500z" fill="url(#win)" />
          </svg>
        </PlainButton>
        <SearchPill>
          <svg width="24" height="24" viewBox="0 0 24 24" fill="none" stroke="#1e2626" strokeWidth="2.500" aria-hidden="true"><circle cx="10" cy="10" r="8" /><path d="M16 16l6 7" /></svg>
          <SearchInput placeholder="搜索" aria-label="搜索" />
          <Glasses />
        </SearchPill>
        <Apps>
          {apps.map(([id, label, state]) => (
            <AppButton key={id} aria-label={label} $active={state === 'active'}>
              <svg width="36" height="36" viewBox="0 0 36 36">{appIcons[id]}</svg>
              <RunMark $state={state} />
            </AppButton>
          ))}
        </Apps>
        <Weather>
          <svg width="40" height="50" viewBox="0 0 40 50">
            <path d="M24 17c10 6 8 26-8 27-6 0-11-3-13-9 12 1 20-6 21-18z" fill="#f29a1e" />
            <path d="M5 27c-7-1-6-9 0-9 1-8 12-8 13-1 6 0 7 9 1 10z" fill="#a8c8f2" />
            <path d="M19 43c-6-1-5-8 0-8 2-7 12-7 13-1 5 0 5 8 1 9z" fill="#bcd2f6" />
            <circle cx="28" cy="12" r="12" fill="#c42b1c" />
            <text x="28" y="18" fill="#fff" fontFamily="Noto Sans, sans-serif" fontSize="16" textAnchor="middle">8</text>
          </svg>
          <span>30°C<Muted>局部多云</Muted></span>
        </Weather>
        <Tray>
          {trayIcons.map(t => <TrayButton key={t.label} $width={t.width} aria-label={t.label}>{t.node}</TrayButton>)}
          <TrayButton $width={46}>英</TrayButton>
          <TrayButton $width={50} aria-label="网络">
            <svg width="24" height="20" viewBox="0 0 24 20" fill="none" stroke="#14201f" strokeWidth="2"><path d="M1 7c7-7 15-7 22 0M5 11c4-5 10-5 14 0M8 15c2-3 6-3 8 0" /><circle cx="12" cy="17" r="1.500" fill="#14201f" /></svg>
          </TrayButton>
          <TrayButton $width={24} aria-label="音量">
            <svg width="24" height="20" viewBox="0 0 24 20" fill="none" stroke="#14201f" strokeWidth="1.500"><path d="M1 7h4l5-5v16l-5-5H1zM13 7c2 2 2 4 0 6M16 4c4 4 4 8 0 12" /><path d="M19 2c5 5 5 11 0 16" stroke="#8fa8a8" /></svg>
          </TrayButton>
          <TrayButton $width={48} aria-label="电池">
            <svg width="26" height="24" viewBox="0 0 26 24"><path d="M10 5h12v9M3 11v8h12" fill="none" stroke="#14201f" strokeWidth="2" /><path d="M6 9h13v4l-5 4H6z" fill="#14201f" /><path d="M5 0l-4 7h3l-1 5 5-7H5zM19 24l-6-6c-1-5 5-5 6-2 1-3 7-3 6 2z" fill="#14201f" /></svg>
          </TrayButton>
          <Clock>22:34<br />2025/6/6</Clock>
        </Tray>
      </TaskBar>
    </Shell>
  );
}
